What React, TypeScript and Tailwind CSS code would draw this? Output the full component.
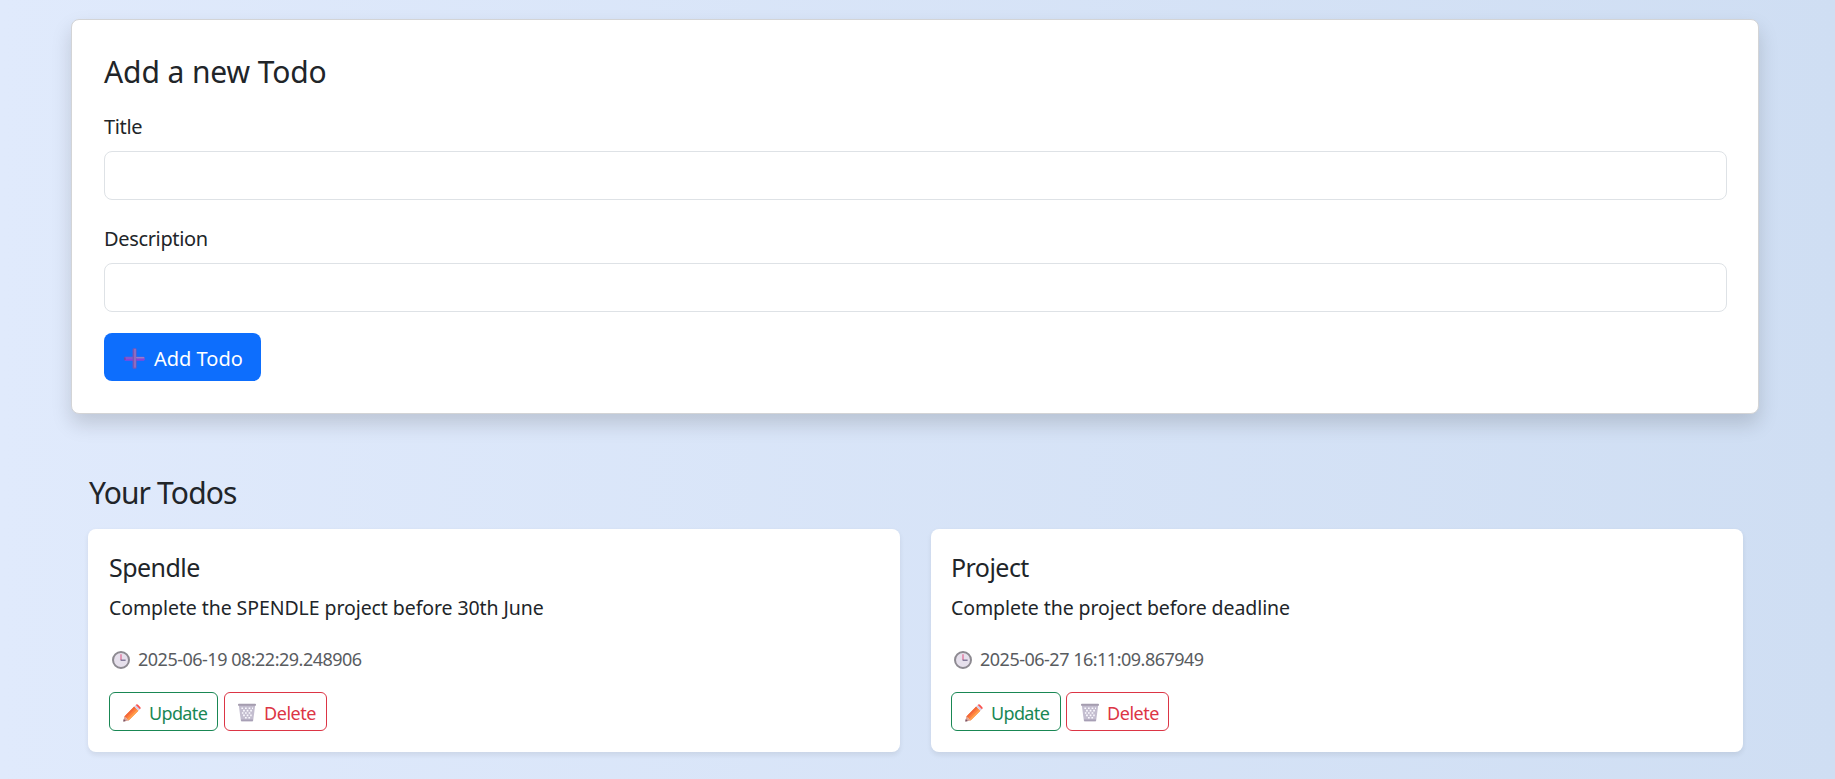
type Todo = { title: string; description: string; created: string };

const todos: Todo[] = [
  {
    title: 'Spendle',
    description: 'Complete the SPENDLE project before 30th June',
    created: '2025-06-19 08:22:29.248906',
  },
  {
    title: 'Project',
    description: 'Complete the project before deadline',
    created: '2025-06-27 16:11:09.867949',
  },
];

function PlusIcon() {
  return (
    <svg width="21" height="21" viewBox="0 0 21 21" className="mt-[3px] shrink-0">
      <rect x="0.3" y="8.8" width="20.4" height="3.6" rx="1.2" fill="#8158cf" />
      <rect x="0.6" y="11" width="19.8" height="1.5" rx="0.7" fill="#8a3fe0" />
      <rect x="8.6" y="0.3" width="3.9" height="20.4" rx="1.2" fill="#7b55b4" />
      <rect x="10.2" y="0.8" width="1.6" height="19" rx="0.8" fill="#9273c4" />
      <rect x="12" y="9" width="8.2" height="1.2" rx="0.6" fill="#9a7bc8" />
      <rect x="0.3" y="9.2" width="1.2" height="2.8" rx="0.6" fill="#713f95" />
    </svg>
  );
}

function ClockIcon() {
  return (
    <svg width="18" height="18" viewBox="0 0 18 18" className="mt-px shrink-0">
      <circle cx="9" cy="9" r="8" fill="#e6e0ec" stroke="#8d8a91" strokeWidth="2" />
      <path d="M9 3.2V9" stroke="#e0709a" strokeWidth="1.3" />
      <path d="M8.6 9.2H13.6" stroke="#6c6388" strokeWidth="1.2" />
    </svg>
  );
}

function PencilIcon() {
  return (
    <svg width="18" height="18" viewBox="0 0 18 18" className="mt-[3px] shrink-0">
      <path d="M1.4 12.4 11.2 2.6 15.4 6.8 5.6 16.6Z" fill="#ff7f3c" />
      <path d="M1.4 12.4 11.2 2.6 12.6 4 2.8 13.8Z" fill="#f2683a" />
      <path d="M4.2 15.2 14 5.4 15.4 6.8 5.6 16.6Z" fill="#ffa04e" />
      <path d="M1.4 12.4 5.6 16.6 0.8 17.6Q0.2 17.6 0.3 17Z" fill="#dba294" />
      <path d="M0.8 15 2.9 17.1 0.8 17.6Q0.2 17.6 0.3 17Z" fill="#76566a" />
      <path d="M11.2 2.6 12.7 1.1 16.9 5.3 15.4 6.8Z" fill="#d6cfe8" />
      <path d="M12.7 1.1Q13.8-.2 15 .8L17.2 3Q18.2 4.1 16.9 5.3Z" fill="#f9504c" />
    </svg>
  );
}

function TrashIcon() {
  return (
    <svg width="18" height="19" viewBox="0 0 18 19" className="mt-[2px] shrink-0">
      <path d="M0.8 2H17.2L15.2 17.6Q15.1 18.3 14.4 18.3H3.6Q2.9 18.3 2.8 17.6Z" fill="#c3bdcf" />
      <rect x="0" y="0.7" width="18" height="2.1" rx="0.9" fill="#a59daf" />
      <path
        d="M3.4 5.2h1.7M7 5.2h1.7M10.6 5.2h1.7M14 5.2h1M5.1 7.6h1.7M8.7 7.6h1.7M12.2 7.6h1.7M3.9 10h1.5M7 10h1.7M10.6 10h1.7M5.1 12.4h1.7M8.7 12.4h1.7M12.2 12.4h1.5M7 14.8h1.7M10.4 14.8h1.7"
        stroke="#fbfaff"
        strokeWidth="1.6"
      />
      <path d="M3 16.6H15L14.9 17.8Q14.8 18.3 14.3 18.3H3.7Q3.2 18.3 3.1 17.8Z" fill="#a79fb5" />
    </svg>
  );
}

function Field({ label, id }: { label: string; id: string }) {
  return (
    <div className="flex flex-col">
      <label htmlFor={id} className="mb-[9px] text-[20px] leading-[30px] tracking-[-0.35px]">
        {label}
      </label>
      <input id={id} className="h-[49px] w-full rounded-[8px] border border-[#dee2e6] bg-white px-4 outline-none" />
    </div>
  );
}

function TodoCard({ todo }: { todo: Todo }) {
  return (
    <article className="group h-[223px] rounded-[8px] bg-white pl-[21px] pt-[23px] shadow-[0_2.5px_5px_rgba(0,0,0,0.075)] even:pl-5">
      <h5 className="text-[25px] leading-[30px] tracking-[-0.55px]">{todo.title}</h5>
      <p className="mt-[11px] text-[19.5px] leading-[30px] tracking-[-0.08px]">{todo.description}</p>
      <div className="mt-[22px] flex h-7 items-center pl-[3px] text-[18px] leading-7 tracking-[-0.5px] text-[#595c5f]">
        <ClockIcon />
        <span className="ml-2">{todo.created}</span>
      </div>
      <div className="mt-[19px] flex gap-[6px] text-[18px] group-even:gap-[5px]">
        <button className="flex h-[39px] w-[109px] items-center rounded-[6px] border border-[#198754] pl-[13px] tracking-[-0.65px] text-[#198754] group-even:w-[110px]">
          <PencilIcon />
          <span className="ml-2 pt-[3px]">Update</span>
        </button>
        <button className="flex h-[39px] w-[103px] items-center rounded-[6px] border border-[#dc3545] pl-[13px] tracking-[-0.45px] text-[#dc3545] group-even:pl-[14px]">
          <TrashIcon />
          <span className="ml-2 pt-[3px]">Delete</span>
        </button>
      </div>
    </article>
  );
}

export default function App() {
  return (
    <main className="h-screen overflow-hidden whitespace-nowrap bg-[linear-gradient(to_right,#e0eafc,#cfdef3)] pl-[71px] pt-[19px] font-['Noto_Sans',sans-serif] text-[#212529]">
      <section className="h-[395px] w-[1688px] rounded-[8px] border border-[#d3d4d6] bg-white pb-[31px] pl-8 pr-[31px] pt-8 shadow-[0_10px_20px_rgba(0,0,0,0.15)]">
        <h4 className="mb-5 text-[30px] leading-10 tracking-[-0.1px]">Add a new Todo</h4>
        <Field label="Title" id="title" />
        <div className="mt-6">
          <Field label="Description" id="description" />
        </div>
        <button className="mt-[21px] flex h-12 w-[157px] items-center rounded-[8px] bg-[#0d6efd] pl-5 text-[20px] text-white">
          <PlusIcon />
          <span className="ml-[9px] pt-[3px]">Add Todo</span>
        </button>
      </section>
      <section className="mt-[59px] w-[1688px] pl-[17px] pr-4">
        <h4 className="pl-px text-[30px] leading-10 tracking-[-0.85px]">Your Todos</h4>
        <div className="mt-4 grid grid-cols-2 gap-[31px]">
          {todos.map((todo) => (
            <TodoCard key={todo.title} todo={todo} />
          ))}
        </div>
      </section>
    </main>
  );
}
